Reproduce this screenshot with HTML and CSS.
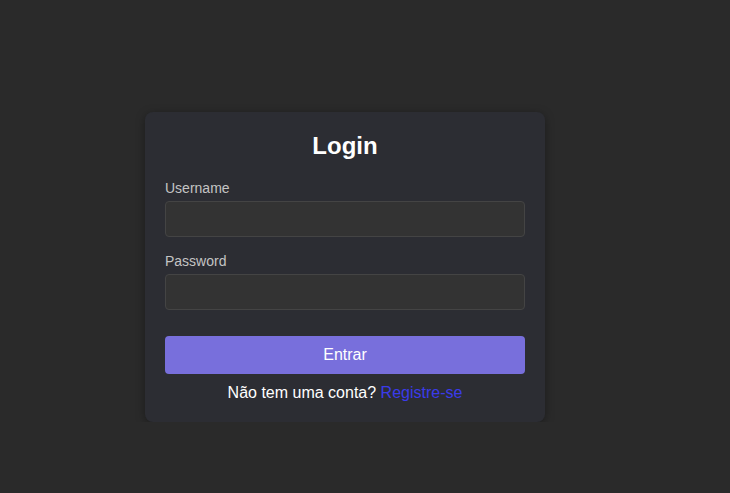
FILE: index.html
```html
<!DOCTYPE html>
<html lang="pt">
<head>
<meta charset="utf-8">
<title>Login</title>
<link rel="stylesheet" href="styles.css">
</head>
<body>
<main class="page">
  <form class="card">
    <h2 class="title">Login</h2>
    <div class="group">
      <label class="label" for="u">Username</label>
      <input class="input" id="u" type="text">
    </div>
    <div class="group">
      <label class="label" for="p">Password</label>
      <input class="input" id="p" type="password">
    </div>
    <button class="btn" type="button">Entrar</button>
    <p class="foot">Não tem uma conta? <a class="link" href="#">Registre-se</a></p>
  </form>
</main>
</body>
</html>
```

FILE: styles.css
```css
html, body {
  margin: 0;
  padding: 0;
  background: #2a2a2a;
  font-family: "Liberation Sans", Arial, sans-serif;
}
.page {
  padding: 112px 0 0 145px;
}
.card {
  box-sizing: border-box;
  width: 400px;
  padding: 20px;
  background: #2c2d33;
  border-radius: 8px;
  box-shadow: 0 2px 10px rgba(0, 0, 0, 0.35);
  display: flex;
  flex-direction: column;
}
.title {
  margin: 0 0 20px;
  font-size: 24px;
  line-height: 28px;
  font-weight: bold;
  color: #ffffff;
  text-align: center;
}
.group {
  display: flex;
  flex-direction: column;
  margin-bottom: 16px;
}
.label {
  font-size: 14px;
  line-height: 16px;
  color: #c4c4c4;
  margin-bottom: 5px;
}
.input {
  box-sizing: border-box;
  height: 36px;
  background: #333333;
  border: 1px solid #444444;
  border-radius: 4px;
  color: #fff;
  font-size: 14px;
  padding: 0 10px;
  margin: 0;
}
.btn {
  margin-top: 10px;
  height: 38px;
  border: none;
  border-radius: 4px;
  background: #786fdc;
  color: #ffffff;
  font-family: inherit;
  font-size: 16px;
}
.foot {
  margin: 10px 0 0;
  font-size: 16px;
  line-height: 18px;
  color: #ffffff;
  text-align: center;
}
.link {
  color: #3b3bea;
  text-decoration: none;
}
```
